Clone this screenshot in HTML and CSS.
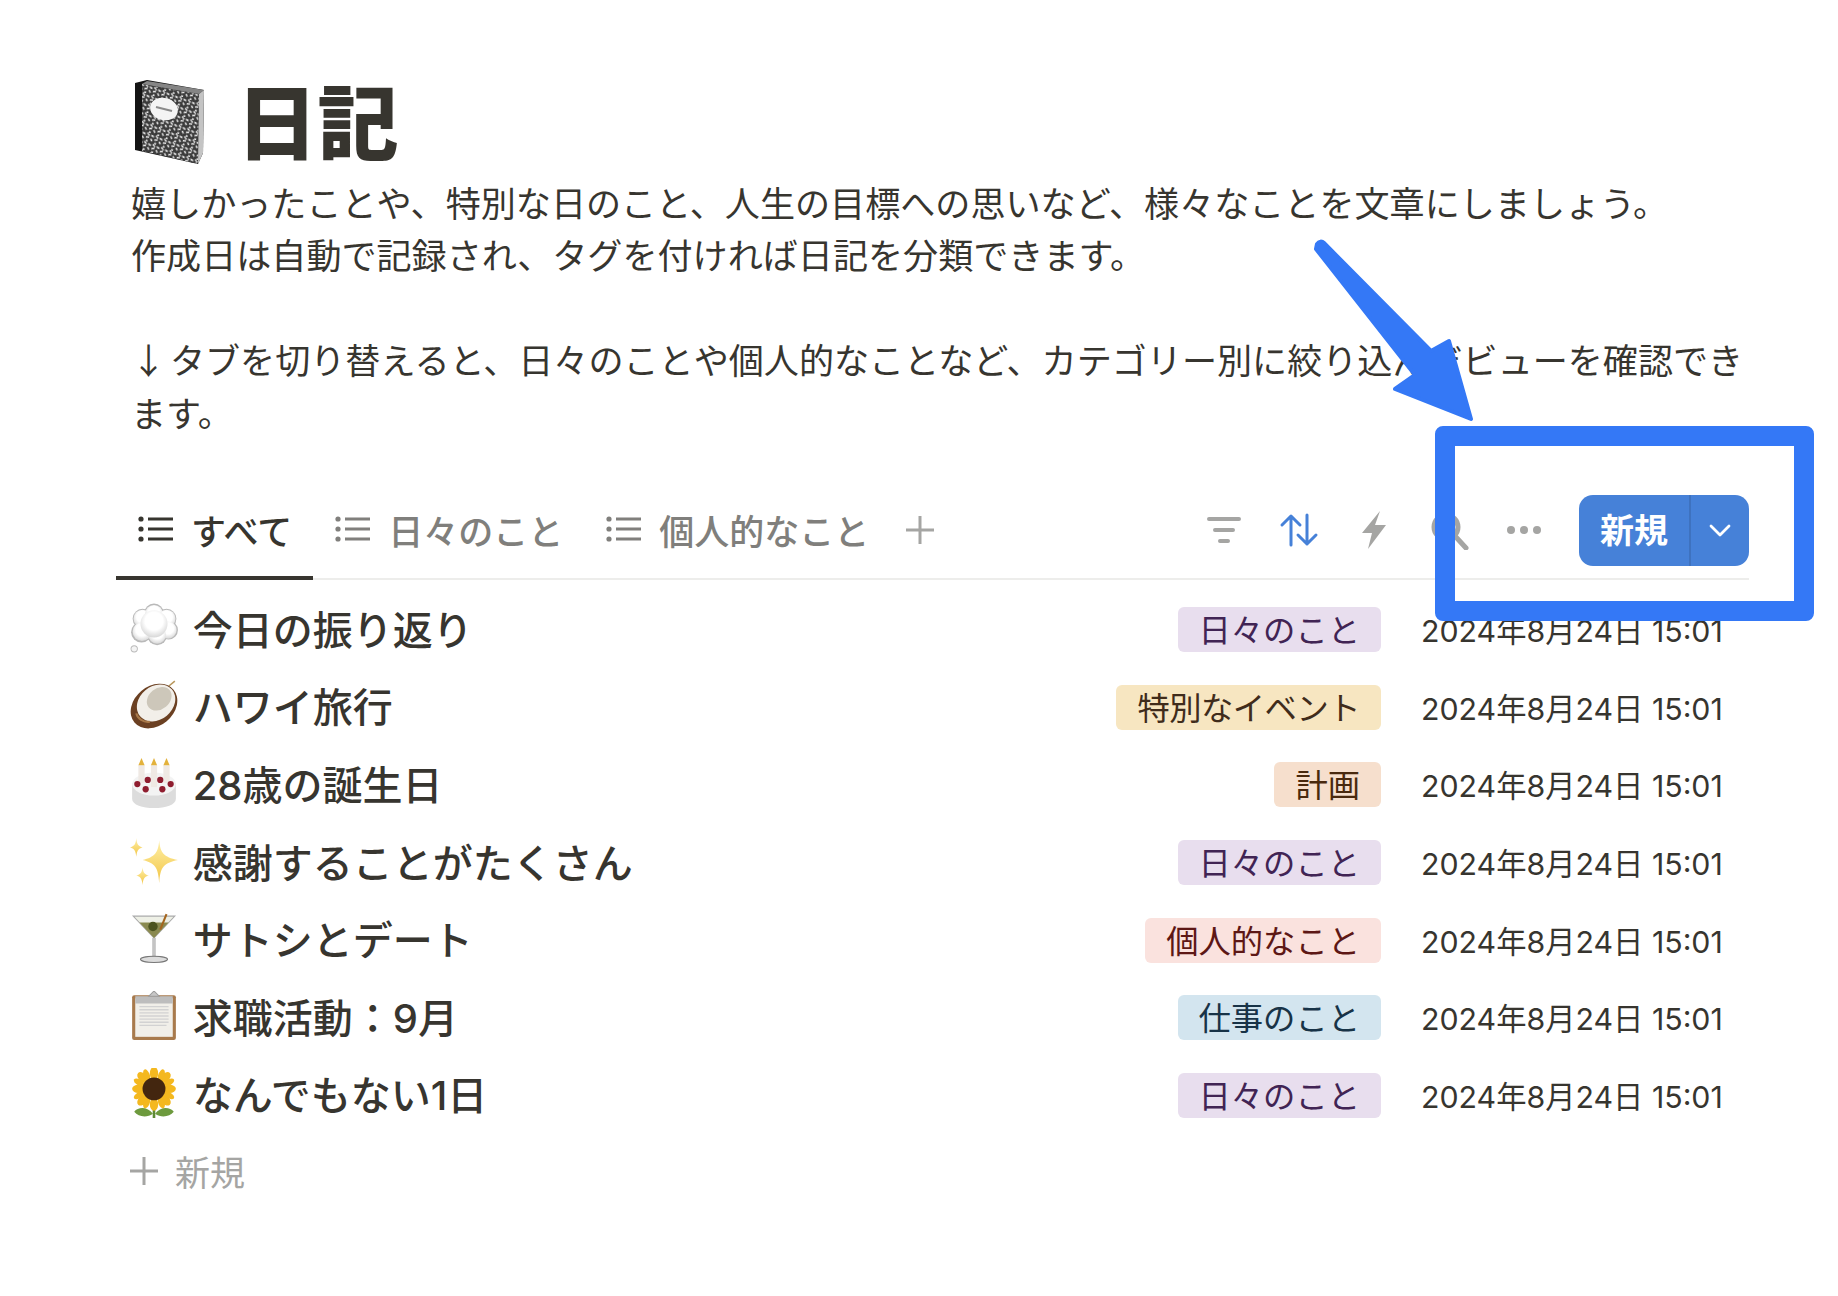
FILE: index.html
```html
<!DOCTYPE html>
<html lang="ja">
<head>
<meta charset="utf-8">
<title>日記</title>
<link rel="stylesheet" href="styles.css">
</head>
<body>
<main class="page">
  <header class="title-row">
    <svg class="title-icon" viewBox="0 0 73 86">
      <defs>
        <pattern id="marble" width="9" height="9" patternUnits="userSpaceOnUse" patternTransform="rotate(20)">
          <rect width="9" height="9" fill="#3a3a3a"/>
          <path d="M0.500 1.500l3 1M5 0.500l3 2M1 5l2 2M5 5l3 -1M6 8l2 0.500" stroke="#eeeeee" stroke-width="1.500" fill="none"/>
        </pattern>
      </defs>
      <path d="M2 4L14 1L71 11L70 74L65 85L2 71Z" fill="#141414"/>
      <path d="M9 5L66 15L65 85L9 72Z" fill="url(#marble)"/>
      <path d="M14 2L71 11L66 15L9 5Z" fill="#858585"/>
      <path d="M66 15L71 11L70 74L65 85Z" fill="#c4c4c4"/>
      <ellipse cx="31" cy="30" rx="14" ry="11" transform="rotate(14 31 30)" fill="#f4f4f4"/>
      <path d="M23 28L39 32" stroke="#8a8a8a" stroke-width="2"/>
    </svg>
    <h1 class="title">日記</h1>
  </header>

  <div class="description">
    <p>嬉しかったことや、特別な日のこと、人生の目標への思いなど、様々なことを文章にしましょう。</p>
    <p>作成日は自動で記録され、タグを付ければ日記を分類できます。</p>
    <p class="blank">&nbsp;</p>
    <p class="arrow-line"><span class="down-arrow">↓</span> タブを切り替えると、日々のことや個人的なことなど、カテゴリー別に絞り込んだビューを確認でき<br>ます。</p>
  </div>

  <nav class="tabbar">
    <div class="tab tab-active">
      <svg class="tab-icon" viewBox="0 0 36 26"><circle cx="3" cy="3" r="2.600"/><circle cx="3" cy="13" r="2.600"/><circle cx="3" cy="23" r="2.600"/><path d="M10 3H35M10 13H35M10 23H35" fill="none" stroke="currentColor" stroke-width="3.200"/></svg>
      <span>すべて</span>
    </div>
    <div class="tab">
      <svg class="tab-icon" viewBox="0 0 36 26"><circle cx="3" cy="3" r="2.600"/><circle cx="3" cy="13" r="2.600"/><circle cx="3" cy="23" r="2.600"/><path d="M10 3H35M10 13H35M10 23H35" fill="none" stroke="currentColor" stroke-width="3.200"/></svg>
      <span>日々のこと</span>
    </div>
    <div class="tab">
      <svg class="tab-icon" viewBox="0 0 36 26"><circle cx="3" cy="3" r="2.600"/><circle cx="3" cy="13" r="2.600"/><circle cx="3" cy="23" r="2.600"/><path d="M10 3H35M10 13H35M10 23H35" fill="none" stroke="currentColor" stroke-width="3.200"/></svg>
      <span>個人的なこと</span>
    </div>
    <svg class="tab-plus" viewBox="0 0 32 32"><path d="M16 2V30M2 16H30" fill="none" stroke="currentColor" stroke-width="3"/></svg>

    <div class="tools">
      <svg class="tool" viewBox="0 0 40 40"><path d="M5 9H35M11 20H29M16 31H24" fill="none" stroke="#a5a5a3" stroke-width="4" stroke-linecap="round"/></svg>
      <svg class="tool" viewBox="0 0 40 40"><path d="M12 35V6M3 15L12 6L21 15M28 5V34M19 25L28 34L37 25" fill="none" stroke="#4681d8" stroke-width="3" stroke-linecap="round" stroke-linejoin="round"/></svg>
      <svg class="tool" viewBox="0 0 40 40"><path d="M26 1L8 23H18L14 39L32 15H21Z" fill="#a5a5a3"/></svg>
      <svg class="tool" viewBox="0 0 40 40"><circle cx="17" cy="17" r="12" fill="none" stroke="#a5a5a3" stroke-width="5"/><path d="M26 26L37 38" stroke="#a5a5a3" stroke-width="5" stroke-linecap="round"/></svg>
      <svg class="tool" viewBox="0 0 40 40"><circle cx="7" cy="20" r="4"/><circle cx="20" cy="20" r="4"/><circle cx="33" cy="20" r="4"/></svg>
    </div>
    <div class="new-button">
      <span class="new-label">新規</span>
      <span class="new-caret"><svg class="caret-icon" viewBox="0 0 24 24"><path d="M3 8L12 17L21 8" fill="none" stroke="#fff" stroke-width="2.800" stroke-linecap="round" stroke-linejoin="round"/></svg></span>
    </div>
  </nav>

  <ul class="rows">
    <li class="row">
      <svg class="emoji" viewBox="0 0 48 48"><defs><radialGradient id="cloud" cx="50%" cy="40%" r="60%"><stop offset="55%" stop-color="#fff"/><stop offset="100%" stop-color="#d8d8d8"/></radialGradient></defs><g fill="#b9b9b9"><circle cx="13" cy="15" r="9.500"/><circle cx="24" cy="10" r="9.500"/><circle cx="36" cy="15" r="9.500"/><circle cx="38" cy="26" r="9"/><circle cx="27" cy="31" r="9.500"/><circle cx="12" cy="28" r="10"/><circle cx="5" cy="44" r="3.500"/></g><g fill="url(#cloud)"><circle cx="13" cy="15" r="8.600"/><circle cx="24" cy="10.500" r="8.600"/><circle cx="36" cy="15" r="8.600"/><circle cx="37.500" cy="26" r="8.200"/><circle cx="27" cy="30.500" r="8.600"/><circle cx="12.500" cy="27.500" r="9"/><circle cx="24" cy="20" r="13"/></g><circle cx="5" cy="44" r="2.600" fill="#f4f4f4"/></svg>
      <span class="row-title">今日の振り返り</span>
      <span class="tag tag-purple">日々のこと</span>
      <span class="date">2024年8月24日 15:01</span>
    </li>
    <li class="row">
      <svg class="emoji" viewBox="0 0 48 48"><path d="M38 6L44 1" stroke="#b9975b" stroke-width="1.500"/><ellipse cx="24" cy="25" rx="24.500" ry="19" transform="rotate(-40 24 25)" fill="#6b4022"/><ellipse cx="26" cy="22" rx="20" ry="16" transform="rotate(-40 26 22)" fill="#f2efe9"/><ellipse cx="29" cy="18" rx="13" ry="10" transform="rotate(-40 29 18)" fill="#cdc7ba"/><path d="M7 32C8 37 14 41 20 40" stroke="#a87848" stroke-width="2" fill="none"/></svg>
      <span class="row-title">ハワイ旅行</span>
      <span class="tag tag-yellow">特別なイベント</span>
      <span class="date">2024年8月24日 15:01</span>
    </li>
    <li class="row">
      <svg class="emoji" viewBox="0 0 48 48"><path d="M3 24V39C3 45 13 48 24 48S45 45 45 39V24Z" fill="#dcdcdc"/><ellipse cx="24" cy="25" rx="21" ry="11" fill="#f3f3f3"/><g fill="#efe9e4"><rect x="9" y="7" width="6" height="17"/><rect x="21" y="7" width="6" height="21"/><rect x="33" y="7" width="6" height="17"/></g><g fill="#e3b23c"><path d="M12 0L15 7H9Z"/><path d="M24 0L27 7H21Z"/><path d="M36 0L39 7H33Z"/></g><g fill="#8f1d2f"><circle cx="8" cy="25" r="3"/><circle cx="18" cy="21" r="3"/><circle cx="30" cy="21" r="3"/><circle cx="40" cy="25" r="3"/><circle cx="16" cy="30" r="3"/><circle cx="32" cy="30" r="3"/></g></svg>
      <span class="row-title">28歳の誕生日</span>
      <span class="tag tag-orange">計画</span>
      <span class="date">2024年8月24日 15:01</span>
    </li>
    <li class="row">
      <svg class="emoji" viewBox="0 0 48 48"><defs><linearGradient id="star" x1="0" y1="0" x2="0" y2="1"><stop offset="0" stop-color="#fff0a8"/><stop offset="1" stop-color="#f2c544"/></linearGradient></defs><g fill="url(#star)"><path d="M29 4C30 16 33 20 47 23C33 26 30 30 29 45C28 30 25 26 13 23C25 20 28 16 29 4Z"/><path d="M7 2C7.500 8 9 10 13 11C9 12 7.500 14 7 20C6.500 14 5 12 1 11C5 10 6.500 8 7 2Z"/><path d="M13 30C13.500 35 15 37 19 38C15 39 13.500 41 13 47C12.500 41 11 39 7 38C11 37 12.500 35 13 30Z"/></g></svg>
      <span class="row-title">感謝することがたくさん</span>
      <span class="tag tag-purple">日々のこと</span>
      <span class="date">2024年8月24日 15:01</span>
    </li>
    <li class="row">
      <svg class="emoji" viewBox="0 0 48 48"><path d="M4 3H44L24 24Z" fill="#eef0e6" stroke="#aaa" stroke-width="1"/><path d="M10 9H38L24 24Z" fill="#8a8a50"/><circle cx="23" cy="13" r="4.500" fill="#4c5420"/><path d="M30 16L36 1" stroke="#a5651e" stroke-width="2"/><path d="M24 24V43" stroke="#c4c4c4" stroke-width="3.500"/><ellipse cx="24" cy="44.500" rx="13" ry="3" fill="#dcdcdc" stroke="#777" stroke-width="1"/></svg>
      <span class="row-title">サトシとデート</span>
      <span class="tag tag-red">個人的なこと</span>
      <span class="date">2024年8月24日 15:01</span>
    </li>
    <li class="row">
      <svg class="emoji" viewBox="0 0 48 48"><rect x="3" y="4" width="42" height="43" rx="2" fill="#a87a4c"/><rect x="6" y="7" width="36" height="37" fill="#f1efe9"/><rect x="6" y="5" width="36" height="7" fill="#bdbdbd"/><path d="M24 0L29 5H19Z" fill="#c7c7c7" stroke="#9a9a9a"/><path d="M10 15H38M10 18H38M10 21H38M10 24H38M10 27H38M10 30H38M10 33H36" stroke="#d2d2d2" stroke-width="1.300"/></svg>
      <span class="row-title">求職活動：9月</span>
      <span class="tag tag-blue">仕事のこと</span>
      <span class="date">2024年8月24日 15:01</span>
    </li>
    <li class="row">
      <svg class="emoji" viewBox="0 0 48 48"><path d="M24 34V48" stroke="#5d8a35" stroke-width="2.500"/><path d="M23 44C18 37 9 37 5 42C9 47 17 48 23 44ZM25 44C30 37 39 37 43 42C39 47 31 48 25 44Z" fill="#6d9a3e"/><g fill="#f4b81f"><ellipse cx="24" cy="5" rx="4" ry="6"/><ellipse cx="24" cy="35" rx="4" ry="6"/><ellipse cx="9" cy="20" rx="6" ry="4"/><ellipse cx="39" cy="20" rx="6" ry="4"/><ellipse cx="13" cy="9" rx="4" ry="6" transform="rotate(-45 13 9)"/><ellipse cx="35" cy="9" rx="4" ry="6" transform="rotate(45 35 9)"/><ellipse cx="13" cy="31" rx="4" ry="6" transform="rotate(45 13 31)"/><ellipse cx="35" cy="31" rx="4" ry="6" transform="rotate(-45 35 31)"/><ellipse cx="17" cy="7" rx="3" ry="6" transform="rotate(-20 17 7)"/><ellipse cx="31" cy="7" rx="3" ry="6" transform="rotate(20 31 7)"/><ellipse cx="17" cy="33" rx="3" ry="6" transform="rotate(20 17 33)"/><ellipse cx="31" cy="33" rx="3" ry="6" transform="rotate(-20 31 33)"/><ellipse cx="10" cy="14" rx="6" ry="3" transform="rotate(30 10 14)"/><ellipse cx="38" cy="14" rx="6" ry="3" transform="rotate(-30 38 14)"/><ellipse cx="10" cy="26" rx="6" ry="3" transform="rotate(-30 10 26)"/><ellipse cx="38" cy="26" rx="6" ry="3" transform="rotate(30 38 26)"/></g><circle cx="24" cy="20" r="11" fill="#43260f"/></svg>
      <span class="row-title">なんでもない1日</span>
      <span class="tag tag-purple">日々のこと</span>
      <span class="date">2024年8月24日 15:01</span>
    </li>
    <li class="row add-row">
      <svg class="add-icon" viewBox="0 0 30 30"><path d="M15 1V29M1 15H29" fill="none" stroke="currentColor" stroke-width="3"/></svg>
      <span>新規</span>
    </li>
  </ul>
</main>

<svg class="annotation-arrow" viewBox="0 0 170 190">
  <path d="M6 6C8 3 11 3 13 5L120 113L138 103L160 181L84 151L104 137L5 11Z" fill="#3478f6" stroke="#3478f6" stroke-width="4" stroke-linejoin="round"/>
</svg>
<div class="annotation-box"></div>
</body>
</html>
```
FILE: styles.css
```css
* {
  box-sizing: border-box;
}

html,
body {
  margin: 0;
  padding: 0;
  background: #fff;
}

body {
  position: relative;
  width: 1838px;
  height: 1296px;
  overflow: hidden;
  color: #37352f;
  font-family: Inter, "Noto Sans CJK JP", sans-serif;
}

.page {
  padding: 79px 89px 0 131px;
}

.title-row {
  display: flex;
  align-items: flex-start;
  height: 96.5px;
}

.title-icon {
  width: 73px;
  height: 86px;
  flex: none;
  margin-left: 1.5px;
}

.title {
  margin: -4px 0 0 31px;
  font-size: 81px;
  line-height: 86px;
  font-weight: 900;
  font-family: "Noto Sans CJK JP", sans-serif;
}

.description {
  font-size: 35.1px;
  line-height: 52.5px;
  font-family: "Noto Sans CJK JP", sans-serif;
  font-weight: 400;
}

.description p {
  margin: 0;
}

.arrow-line {
  margin-left: -3px;
  word-spacing: -4px;
}

.tabbar {
  display: flex;
  align-items: center;
  height: 98px;
  margin-top: 44px;
  border-bottom: 2px solid #ededeb;
}

.tab {
  display: flex;
  align-items: center;
  gap: 17px;
  height: 98px;
  margin-bottom: -2px;
  padding: 0 21px 0 22px;
  border-bottom: 4px solid transparent;
  color: #807f7c;
  font-family: "Noto Sans CJK JP", sans-serif;
  font-size: 35px;
  font-weight: 500;
}

.tab:first-child {
  margin-left: -15px;
}

.tab-active {
  border-bottom-color: #37352f;
  color: #37352f;
}

.tab-icon {
  width: 36px;
  height: 26px;
  flex: none;
  fill: currentColor;
}

.tab-plus {
  width: 32px;
  height: 32px;
  margin-left: 14px;
  color: #a5a5a3;
}

.tools {
  display: flex;
  align-items: center;
  gap: 35px;
  margin-left: auto;
}

.tool {
  display: block;
  width: 40px;
  height: 40px;
  fill: #a5a5a3;
}

.new-button {
  display: flex;
  align-items: stretch;
  width: 170px;
  height: 71px;
  margin-left: 35px;
  border-radius: 14px;
  background: #4681d8;
  color: #fff;
}

.new-label {
  display: flex;
  flex: 1;
  align-items: center;
  justify-content: center;
  padding-bottom: 4px;
  border-right: 2px solid #3e72bf;
  font-family: "Noto Sans CJK JP", sans-serif;
  font-size: 34px;
  font-weight: 700;
}

.new-caret {
  display: flex;
  flex: none;
  width: 58px;
  align-items: center;
  justify-content: center;
}

.caret-icon {
  width: 24px;
  height: 24px;
}

.rows {
  margin: 9px 0 0;
  padding: 0;
  list-style: none;
}

.row {
  display: flex;
  align-items: center;
  height: 77.6px;
  padding-right: 26px;
}

.emoji {
  width: 50px;
  height: 50px;
  flex: none;
  margin-left: -2px;
}

.row-title {
  flex: 1;
  margin-left: 13.7px;
  font-size: 40px;
  font-weight: 500;
  font-family: Inter, "Noto Sans CJK JP", sans-serif;
}

.tag {
  height: 45px;
  margin-top: 4px;
  padding: 0 21px;
  border-radius: 6px;
  font-family: "Noto Sans CJK JP", sans-serif;
  font-size: 32.3px;
  line-height: 43px;
}

.tag-purple {
  background: #e8deee;
  color: #412454;
}

.tag-yellow {
  background: #f7e6c1;
  color: #402c1b;
  letter-spacing: -0.5px;
}

.tag-orange {
  background: #f6dfcd;
  color: #49290e;
}

.tag-red {
  background: #fae2de;
  color: #5d1715;
}

.tag-blue {
  background: #d3e5ef;
  color: #183347;
}

.date {
  flex: none;
  width: 302px;
  margin-top: 3px;
  margin-left: 40px;
  font-size: 30.3px;
  white-space: nowrap;
}

.add-row {
  color: #a5a5a3;
  font-family: "Noto Sans CJK JP", sans-serif;
  font-size: 35px;
}

.add-icon {
  width: 30px;
  height: 30px;
  margin: 0 16px 0 -2px;
}

.annotation-arrow {
  position: absolute;
  left: 1311px;
  top: 238px;
  width: 170px;
  height: 190px;
}

.annotation-box {
  position: absolute;
  left: 1435px;
  top: 426px;
  width: 379px;
  height: 195px;
  border: 20px solid #3478f6;
  border-radius: 8px;
}
```
